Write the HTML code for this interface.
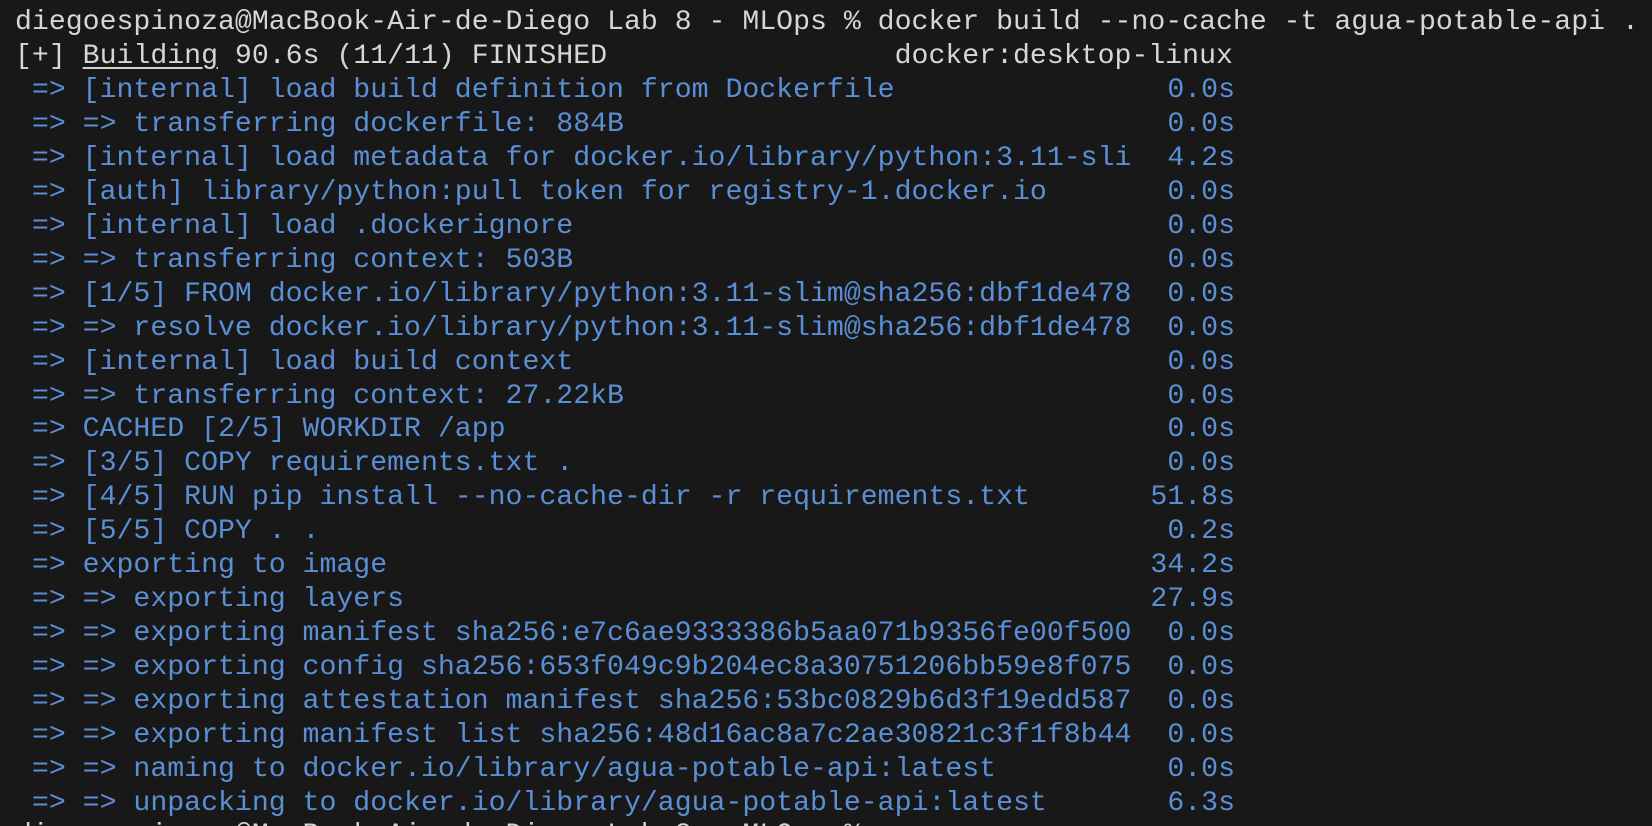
<!DOCTYPE html>
<html><head><meta charset="utf-8"><style>
html,body{margin:0;padding:0;background:#181818;width:1652px;height:826px;overflow:hidden}
#w{position:absolute;left:0;top:2px;width:1652px;height:824px;overflow:hidden}
.l,.t{position:absolute;height:34px;line-height:34px;font-family:"Liberation Mono","DejaVu Sans Mono",monospace;font-size:28.2px;white-space:pre}
.l{left:15px;color:#d6d6d6}
.b{color:#5b8fd5}
.t{color:#5b8fd5;right:417px;text-align:right}
u{text-decoration:underline;text-underline-offset:4px}
</style></head><body><div id="w">
<div class="l" style="top:4px">diegoespinoza@MacBook-Air-de-Diego Lab 8 - MLOps % docker build --no-cache -t agua-potable-api .</div>
<div class="l" style="top:38px">[+] <u>Building</u> 90.6s (11/11) FINISHED                 docker:desktop-linux</div>
<div class="l b" style="top:72px"> => [internal] load build definition from Dockerfile</div><div class="t" style="top:72px">0.0s</div>
<div class="l b" style="top:106px"> => => transferring dockerfile: 884B</div><div class="t" style="top:106px">0.0s</div>
<div class="l b" style="top:140px"> => [internal] load metadata for docker.io/library/python:3.11-sli</div><div class="t" style="top:140px">4.2s</div>
<div class="l b" style="top:174px"> => [auth] library/python:pull token for registry-1.docker.io</div><div class="t" style="top:174px">0.0s</div>
<div class="l b" style="top:208px"> => [internal] load .dockerignore</div><div class="t" style="top:208px">0.0s</div>
<div class="l b" style="top:242px"> => => transferring context: 503B</div><div class="t" style="top:242px">0.0s</div>
<div class="l b" style="top:276px"> => [1/5] FROM docker.io/library/python:3.11-slim@sha256:dbf1de478</div><div class="t" style="top:276px">0.0s</div>
<div class="l b" style="top:310px"> => => resolve docker.io/library/python:3.11-slim@sha256:dbf1de478</div><div class="t" style="top:310px">0.0s</div>
<div class="l b" style="top:344px"> => [internal] load build context</div><div class="t" style="top:344px">0.0s</div>
<div class="l b" style="top:378px"> => => transferring context: 27.22kB</div><div class="t" style="top:378px">0.0s</div>
<div class="l b" style="top:411px"> => CACHED [2/5] WORKDIR /app</div><div class="t" style="top:411px">0.0s</div>
<div class="l b" style="top:445px"> => [3/5] COPY requirements.txt .</div><div class="t" style="top:445px">0.0s</div>
<div class="l b" style="top:479px"> => [4/5] RUN pip install --no-cache-dir -r requirements.txt</div><div class="t" style="top:479px">51.8s</div>
<div class="l b" style="top:513px"> => [5/5] COPY . .</div><div class="t" style="top:513px">0.2s</div>
<div class="l b" style="top:547px"> => exporting to image</div><div class="t" style="top:547px">34.2s</div>
<div class="l b" style="top:581px"> => => exporting layers</div><div class="t" style="top:581px">27.9s</div>
<div class="l b" style="top:615px"> => => exporting manifest sha256:e7c6ae9333386b5aa071b9356fe00f500</div><div class="t" style="top:615px">0.0s</div>
<div class="l b" style="top:649px"> => => exporting config sha256:653f049c9b204ec8a30751206bb59e8f075</div><div class="t" style="top:649px">0.0s</div>
<div class="l b" style="top:683px"> => => exporting attestation manifest sha256:53bc0829b6d3f19edd587</div><div class="t" style="top:683px">0.0s</div>
<div class="l b" style="top:717px"> => => exporting manifest list sha256:48d16ac8a7c2ae30821c3f1f8b44</div><div class="t" style="top:717px">0.0s</div>
<div class="l b" style="top:751px"> => => naming to docker.io/library/agua-potable-api:latest</div><div class="t" style="top:751px">0.0s</div>
<div class="l b" style="top:785px"> => => unpacking to docker.io/library/agua-potable-api:latest</div><div class="t" style="top:785px">6.3s</div>
<div class="l" style="top:817px">diegoespinoza@MacBook-Air-de-Diego Lab 8 - MLOps % </div>
</div></body></html>
